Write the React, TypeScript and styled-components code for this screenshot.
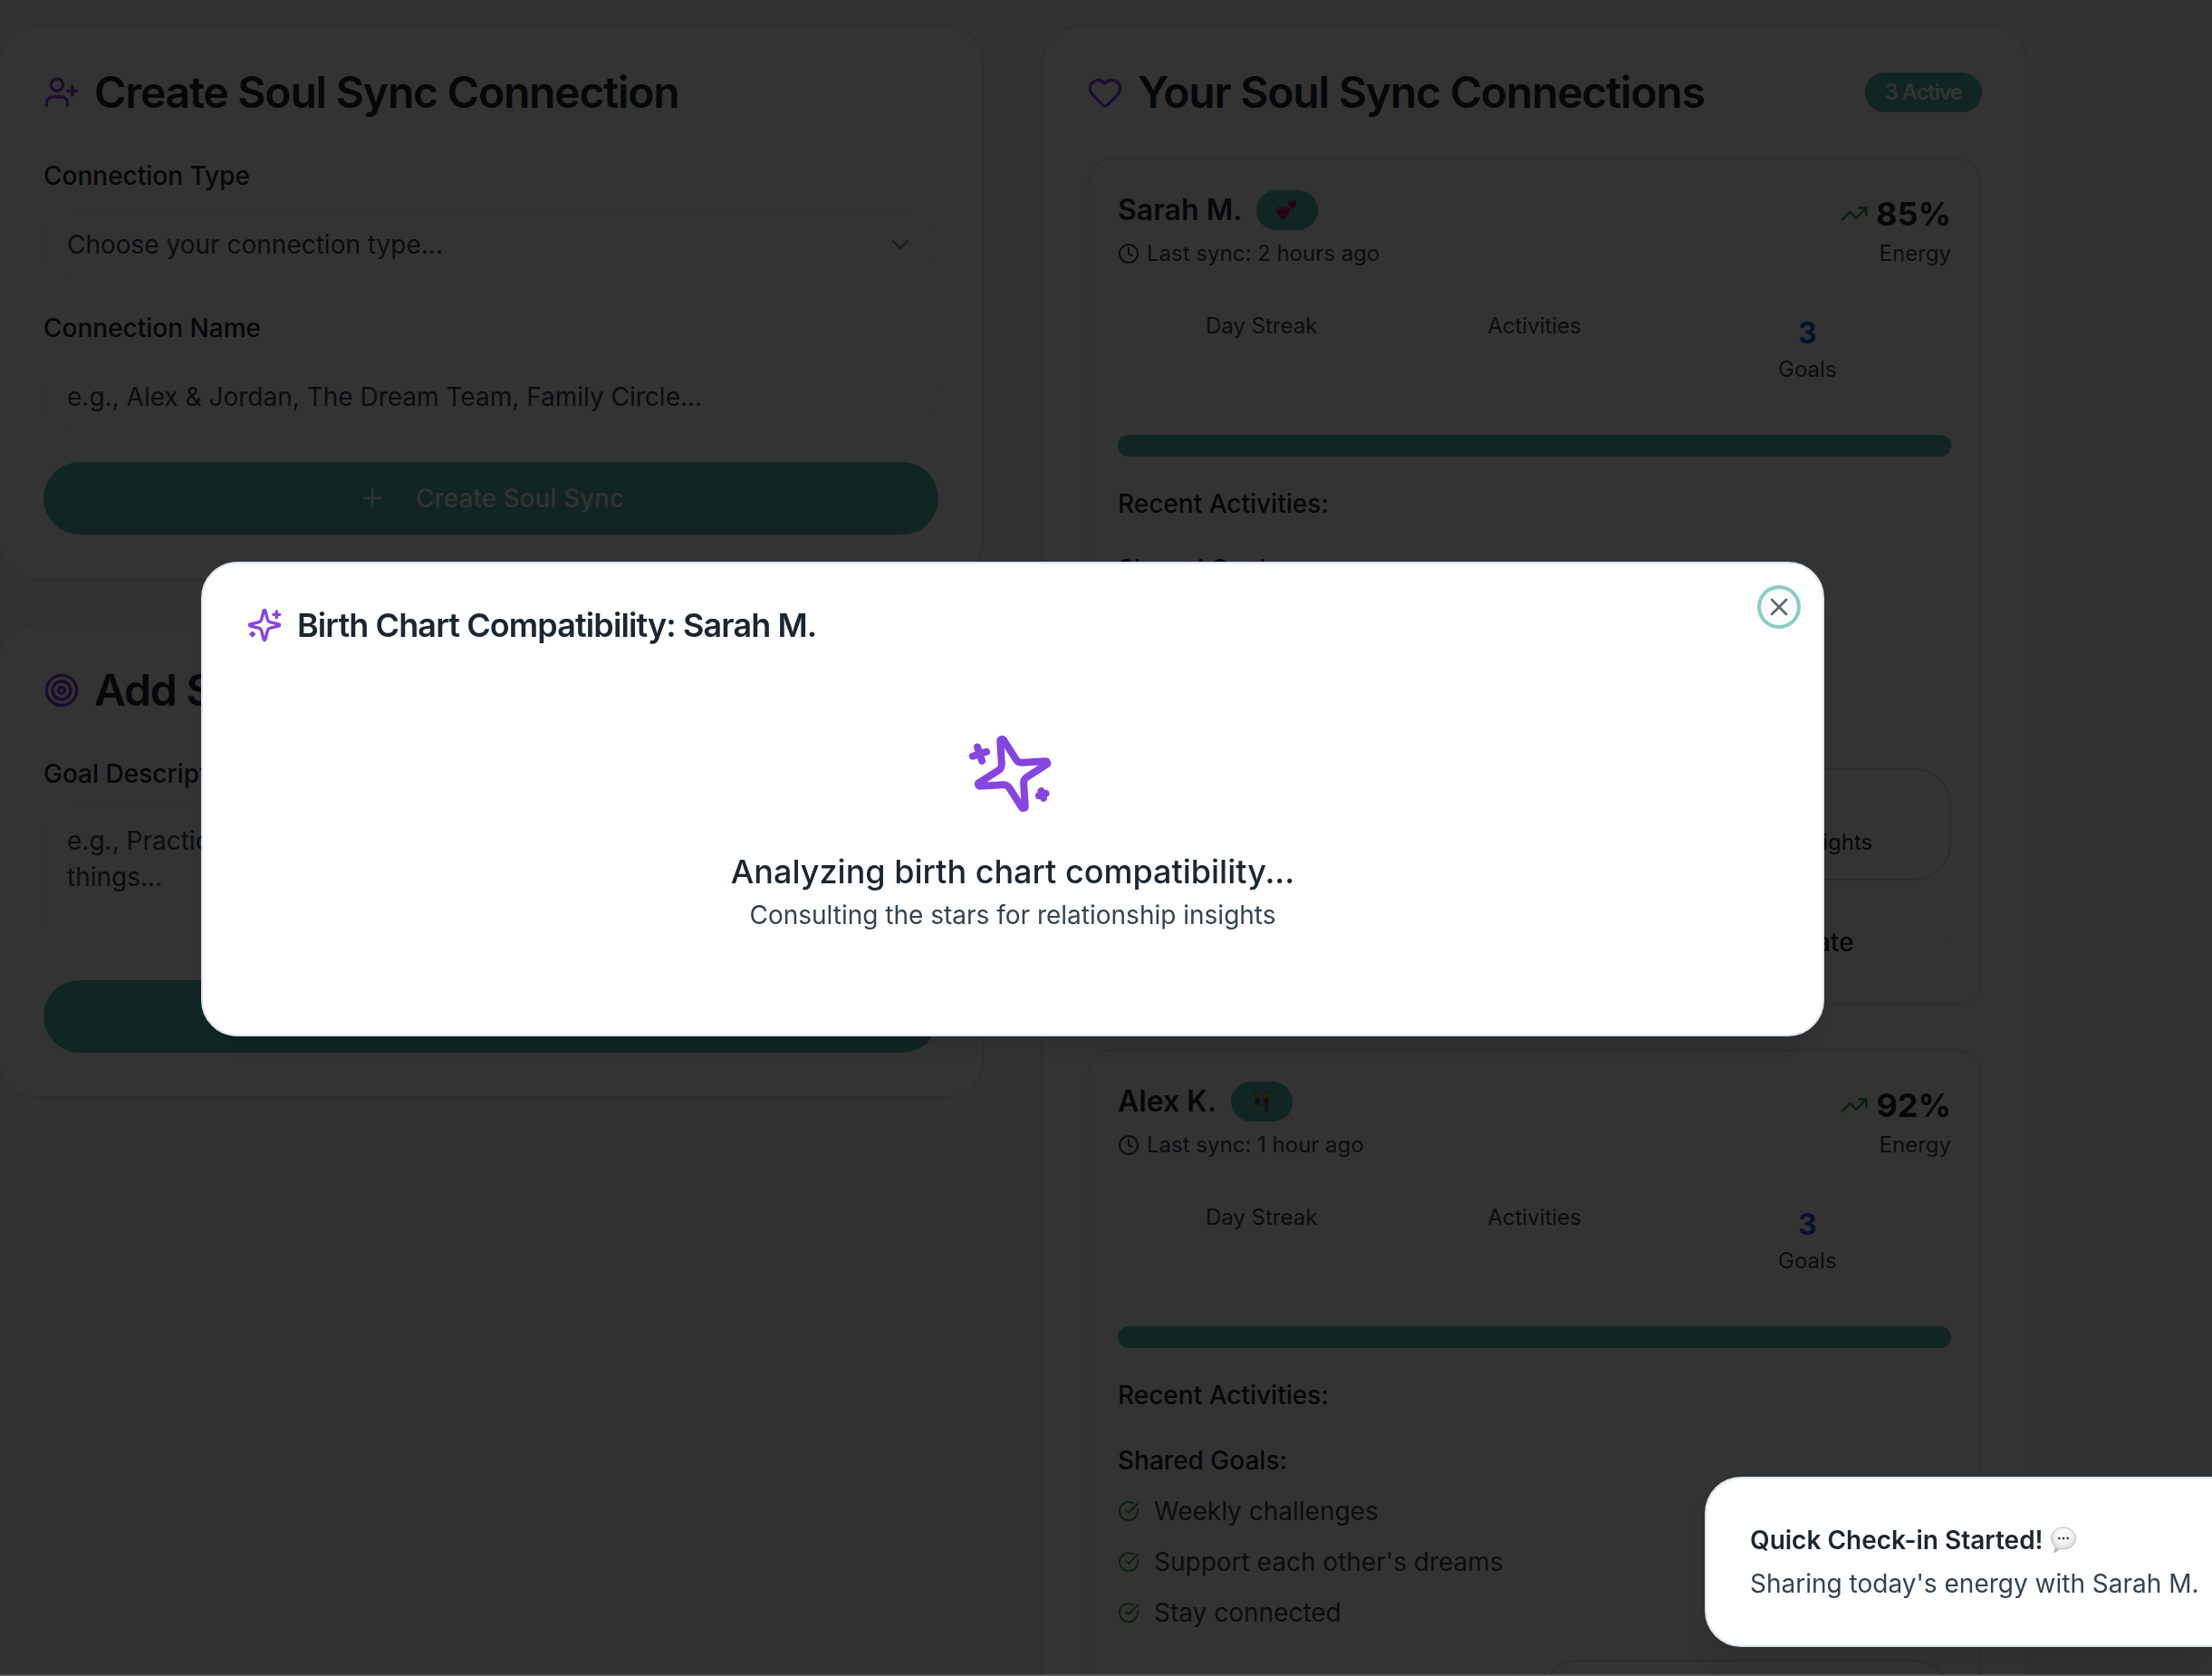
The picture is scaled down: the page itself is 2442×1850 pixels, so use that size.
import React from 'react';
import styled, { createGlobalStyle } from 'styled-components';
import {
  CalendarHeart,
  ChevronDown,
  CircleCheckBig,
  Clock,
  Heart,
  MessageCircle,
  Plus,
  Send,
  Target,
  TrendingUp,
  UserPlus,
  X,
} from 'lucide-react';

const color = {
  ink: '#1c2630',
  slate: '#364250',
  border: '#e2e8f0',
  field: '#f8f9fa',
  primary: '#55b9aa',
  purple: '#8644e1',
  green: '#3f9d4c',
  blue: '#2f4fd8',
};

const GlobalStyle = createGlobalStyle`
  *, *::before, *::after { box-sizing: border-box; }
  html, body { margin: 0; height: 100%; }
  body {
    overflow: hidden;
    background: #fbfbfb;
    color: ${color.ink};
    font-family: Inter, "Liberation Sans", sans-serif;
    font-size: 28px;
    line-height: 40px;
    -webkit-font-smoothing: antialiased;
  }
  h1, h2, h3, h4, p, ul { margin: 0; padding: 0; }
  button, input, select, textarea { font: inherit; color: inherit; }
  svg { flex: none; display: block; }
`;

const Page = styled.main`
  height: 100vh;
  overflow: hidden;
  padding: 28px 204px 0 0;
  background:
    radial-gradient(ellipse 500px 80px at 38% 0, #f3fbf6, transparent),
    radial-gradient(ellipse 600px 1000px at 8% 92%, #f4fbf7, transparent),
    #fbfbfb;
`;

const Columns = styled.div`
  display: grid;
  grid-template-columns: repeat(2, minmax(0, 1fr));
  gap: 64px;
  align-items: start;
  margin-left: -2px;
`;

const Stack = styled.div<{ $gap: number }>`
  display: flex;
  flex-direction: column;
  gap: ${(p) => p.$gap}px;
`;

const Card = styled.section`
  display: flex;
  flex-direction: column;
  gap: 48px;
  padding: 48px;
  background: #fdfdfd;
  border: 2px solid ${color.border};
  border-radius: 40px;
  box-shadow: 0 2px 4px rgba(0, 0, 0, 0.05);
`;

const Row = styled.div<{ $gap: number; $between?: boolean }>`
  display: flex;
  align-items: center;
  gap: ${(p) => p.$gap}px;
  justify-content: ${(p) => (p.$between ? 'space-between' : 'flex-start')};
`;

const CardTitle = styled.h2`
  display: flex;
  align-items: center;
  gap: 16px;
  font-size: 48px;
  line-height: 48px;
  font-weight: 600;
  letter-spacing: -0.025em;
  svg { color: ${color.purple}; }
`;

const Field = styled.div`
  display: flex;
  flex-direction: column;
  gap: 16px;
`;

const Label = styled.label`
  font-weight: 500;
`;

const SelectWrap = styled.div`
  display: grid;
  align-items: center;
  > * { grid-area: 1 / 1; }
  > svg { justify-self: end; margin-right: 26px; opacity: 0.5; pointer-events: none; }
`;

const fieldBase = `
  width: 100%;
  padding: 0 24px;
  background: transparent;
  border: 2px solid ${color.field};
  border-radius: 36px;
  outline: none;
  color: ${color.slate};
`;

const Select = styled.select`
  ${fieldBase}
  height: 80px;
  appearance: none;
`;

const Input = styled.input`
  ${fieldBase}
  height: 80px;
  &::placeholder { color: ${color.slate}; opacity: 1; }
`;

const TextArea = styled.textarea`
  ${fieldBase}
  display: block;
  height: 160px;
  padding: 16px 24px;
  resize: none;
  &::placeholder { color: ${color.slate}; opacity: 1; }
`;

const PrimaryButton = styled.button`
  display: flex;
  align-items: center;
  justify-content: center;
  gap: 32px;
  height: 80px;
  border: 0;
  border-radius: 40px;
  background: ${color.primary};
  color: #fdfdfd;
  font-weight: 500;
`;

const Pill = styled.span`
  display: inline-flex;
  align-items: center;
  height: 44px;
  padding: 0 22px;
  border-radius: 22px;
  background: ${color.primary};
  color: #fdfdfd;
  font-size: 24px;
  line-height: 32px;
  font-weight: 600;
`;

const CountPill = styled(Pill)`
  letter-spacing: -0.05em;
`;

const Connection = styled.article`
  display: flex;
  flex-direction: column;
  gap: 32px;
  padding: 32px;
  border: 2px solid ${color.border};
  border-radius: 28px;
`;

const PersonName = styled.h3`
  font-size: 32px;
  line-height: 48px;
  font-weight: 600;
`;

const Small = styled.div`
  display: flex;
  align-items: center;
  gap: 8px;
  font-size: 24px;
  line-height: 32px;
  color: ${color.slate};
`;

const EnergyColumn = styled.div`
  display: flex;
  flex-direction: column;
  align-items: flex-end;
`;

const Energy = styled.div`
  display: flex;
  align-items: center;
  gap: 8px;
  font-size: 36px;
  line-height: 56px;
  font-weight: 700;
  svg { color: ${color.green}; }
`;

const Stats = styled.div`
  display: grid;
  grid-template-columns: repeat(3, 1fr);
  gap: 16px;
  padding: 16px;
  justify-items: center;
`;

const Stat = styled.div`
  display: flex;
  flex-direction: column;
  align-items: center;
`;

const StatValue = styled.div`
  font-size: 32px;
  line-height: 48px;
  font-weight: 700;
  color: ${color.blue};
`;

const Progress = styled.div`
  height: 24px;
  margin-top: 8px;
  border-radius: 12px;
  background: ${color.primary};
`;

const SubHeading = styled.h4`
  font-size: 28px;
  line-height: 40px;
  font-weight: 500;
`;

const GoalList = styled.ul`
  display: flex;
  flex-direction: column;
  gap: 16px;
  list-style: none;
`;

const Goal = styled.li`
  display: flex;
  align-items: center;
  gap: 16px;
  color: ${color.slate};
  svg { color: ${color.green}; }
`;

const Actions = styled.div`
  display: grid;
  grid-template-columns: repeat(2, minmax(0, 1fr));
  gap: 32px 16px;
`;

const FeatureButton = styled.button<{ $tint: string }>`
  display: flex;
  flex-direction: column;
  align-items: center;
  justify-content: center;
  height: 124px;
  padding: 0 24px;
  border: 2px solid ${(p) => p.$tint};
  border-radius: 40px;
  background: transparent;
  font-weight: 500;
`;

const FeatureHint = styled.span`
  font-size: 24px;
  line-height: 32px;
  font-weight: 400;
`;

const GhostButton = styled.button`
  display: flex;
  align-items: center;
  justify-content: center;
  gap: 32px;
  height: 72px;
  border: 2px solid ${color.field};
  border-radius: 36px;
  background: transparent;
  font-weight: 500;
`;

const Overlay = styled.div`
  position: fixed;
  inset: 0;
  display: flex;
  align-items: center;
  justify-content: center;
  padding: 0 206px 84px 0;
  background: rgba(0, 0, 0, 0.8);
  border-bottom: 2px solid #555555;
`;

const Dialog = styled.div`
  position: relative;
  display: flex;
  flex-direction: column;
  gap: 32px;
  width: 100%;
  max-width: 1792px;
  padding: 48px;
  background: #ffffff;
  border: 2px solid #dce5f0;
  border-radius: 40px;
  box-shadow: 0 20px 30px -6px rgba(0, 0, 0, 0.1), 0 8px 12px -8px rgba(0, 0, 0, 0.1);
`;

const DialogTitle = styled.h2`
  display: flex;
  align-items: center;
  gap: 16px;
  font-size: 36px;
  line-height: 40px;
  font-weight: 600;
  letter-spacing: -0.025em;
  svg { color: ${color.purple}; }
`;

const CloseButton = styled.button`
  position: absolute;
  top: 32px;
  right: 32px;
  display: flex;
  padding: 0;
  border: 0;
  border-radius: 50%;
  background: transparent;
  opacity: 0.7;
  outline: none;
  box-shadow: 0 0 0 4px #ffffff, 0 0 0 8px ${color.primary};
`;

const Loading = styled.div`
  display: flex;
  flex-direction: column;
  align-items: center;
  padding: 64px 0;
`;

const LoadingIcon = styled.div`
  margin-bottom: 32px;
  color: ${color.purple};
  transform: rotate(-108deg);
`;

const LoadingTitle = styled.p`
  font-size: 36px;
  line-height: 56px;
  font-weight: 500;
`;

const Muted = styled.p`
  color: ${color.slate};
`;

const Toast = styled.div`
  position: fixed;
  right: 0;
  bottom: 32px;
  display: flex;
  flex-direction: column;
  gap: 8px;
  width: 560px;
  padding: 48px 0 48px 48px;
  background: #ffffff;
  border: 2px solid #dce5f0;
  border-right: 0;
  border-radius: 40px 0 0 40px;
  box-shadow: 0 20px 30px -6px rgba(0, 0, 0, 0.1);
`;

const ToastTitle = styled.div`
  display: flex;
  align-items: center;
  gap: 8px;
  font-weight: 600;
`;

const Sparkles = ({ size }: { size: number }) => (
  <svg width={size} height={size} viewBox="0 0 24 24" fill="none" stroke="currentColor" strokeWidth="2" strokeLinecap="round" strokeLinejoin="round" aria-hidden="true">
    <path d="M9.937 15.5A2 2 0 0 0 8.5 14.063l-6.135-1.582a.5.5 0 0 1 0-.962L8.5 9.936A2 2 0 0 0 9.937 8.5l1.582-6.135a.5.5 0 0 1 .963 0L14.063 8.5A2 2 0 0 0 15.5 9.937l6.135 1.581a.5.5 0 0 1 0 .964L15.5 14.063a2 2 0 0 0-1.437 1.437l-1.582 6.135a.5.5 0 0 1-.963 0z" />
    <path d="M20 3v4" />
    <path d="M22 5h-4" />
    <path d="M4 17v2" />
    <path d="M5 18H3" />
  </svg>
);

const HeartsEmoji = () => (
  <svg width="24" height="24" viewBox="0 0 24 24" role="img" aria-label="Two hearts">
    <path d="M7.500 23C5 20 0 17 0 12 0 7.500 5.500 6.500 7.500 10 9.500 6.500 15 7.500 15 12 15 17 10 20 7.500 23z" fill="#b8145c" />
    <path d="M17.800 10.500C16.400 9 13 7 13 4.200 13 1.200 16.600.6 17.800 3 19 .6 22.600 1.200 22.600 4.200 22.600 7 19.200 9 17.800 10.500z" fill="#b8145c" />
    <path d="M2.200 10.600c.5-1.300 2-1.600 3-.8M14.800 3.600c.4-.9 1.200-1 1.800-.4M9.800 9.800c.9-.8 2.300-.6 2.900.4" stroke="#dc6f9f" strokeWidth="1.100" fill="none" strokeLinecap="round" />
  </svg>
);

const FriendsEmoji = () => (
  <svg width="24" height="24" viewBox="0 0 24 24" role="img" aria-label="Friends holding hands">
    <circle cx="7" cy="3.800" r="3.400" fill="#a8742a" />
    <circle cx="7" cy="4.600" r="2" fill="#d3a545" />
    <path d="M5 8h4l1.200 7.500H3.800z" fill="#27509f" />
    <path d="M4.600 9 3.200 14M9.400 9l2.200 4.500" stroke="#c39840" strokeWidth="1.100" strokeLinecap="round" />
    <path d="M5.800 15.500v7.500M8.200 15.500v7.500" stroke="#c39840" strokeWidth="1.300" />
    <circle cx="16.800" cy="3.800" r="3" fill="#a8742a" />
    <circle cx="16.800" cy="4.600" r="2" fill="#d3a545" />
    <path d="M14.200 8h5.200l.3 6.500h-5.800z" fill="#a5252d" />
    <path d="M14 9l-2.200 4.500M19.800 9l1.200 5" stroke="#c39840" strokeWidth="1.100" strokeLinecap="round" />
    <path d="M15.500 14.500v9M18.100 14.500v9" stroke="#6a4f47" strokeWidth="2" />
  </svg>
);

const SpeechEmoji = () => (
  <svg width="28" height="30" viewBox="0 0 28 30" role="img" aria-label="Speech balloon">
    <defs>
      <radialGradient id="bubble" cx="0.5" cy="0.35" r="0.65">
        <stop offset="0.4" stopColor="#f8f8f8" />
        <stop offset="0.8" stopColor="#dcdcdc" />
        <stop offset="1" stopColor="#a8a8a8" />
      </radialGradient>
    </defs>
    <path d="M14 1C21.500 1 27.500 6 27.500 13S21.500 25 14 25c-1.600 0-3-.2-4.300-.6C8 26.800 5.600 28.200 3.200 28.400c1.400-1.600 2-3.700 1.700-6.200C2.200 20 .6 16.700.6 13 .6 6 6.500 1 14 1z" fill="url(#bubble)" stroke="#b4b4b4" strokeWidth=".8" />
    <circle cx="9.300" cy="13" r="1.300" fill="#333333" />
    <circle cx="14" cy="13" r="1.300" fill="#333333" />
    <circle cx="18.700" cy="13" r="1.300" fill="#333333" />
  </svg>
);

interface Person {
  name: string;
  emoji: React.ReactNode;
  lastSync: string;
  energy: number;
  goals: string[];
}

const people: Person[] = [
  {
    name: 'Sarah M.',
    emoji: <HeartsEmoji />,
    lastSync: '2 hours ago',
    energy: 85,
    goals: ['Daily gratitude practice', 'Weekly date nights', 'Monthly adventures'],
  },
  {
    name: 'Alex K.',
    emoji: <FriendsEmoji />,
    lastSync: '1 hour ago',
    energy: 92,
    goals: ['Weekly challenges', "Support each other's dreams", 'Stay connected'],
  },
];

const ConnectionCard = ({ person }: { person: Person }) => (
  <Connection>
    <Row $gap={16} $between>
      <Stack $gap={8}>
        <Row $gap={16}>
          <PersonName>{person.name}</PersonName>
          <Pill>{person.emoji}</Pill>
        </Row>
        <Small>
          <Clock size={24} />
          Last sync: {person.lastSync}
        </Small>
      </Stack>
      <EnergyColumn>
        <Energy>
          <TrendingUp size={32} />
          {person.energy}%
        </Energy>
        <Small>Energy</Small>
      </EnergyColumn>
    </Row>
    <Stats>
      <Stat>
        <Small>Day Streak</Small>
      </Stat>
      <Stat>
        <Small>Activities</Small>
      </Stat>
      <Stat>
        <StatValue>{person.goals.length}</StatValue>
        <Small>Goals</Small>
      </Stat>
    </Stats>
    <Progress role="progressbar" aria-label="Energy level" aria-valuenow={person.energy} />
    <SubHeading>Recent Activities:</SubHeading>
    <Stack $gap={16}>
      <SubHeading>Shared Goals:</SubHeading>
      <GoalList>
        {person.goals.map((goal) => (
          <Goal key={goal}>
            <CircleCheckBig size={24} />
            {goal}
          </Goal>
        ))}
      </GoalList>
    </Stack>
    <Actions>
      <FeatureButton $tint={color.field}>
        Quick Check-in
        <FeatureHint>Share today's energy</FeatureHint>
      </FeatureButton>
      <FeatureButton $tint="#e3daf6">
        Birth Chart
        <FeatureHint>Star relationship insights</FeatureHint>
      </FeatureButton>
      <GhostButton>
        <MessageCircle size={32} />
        Message
      </GhostButton>
      <GhostButton>
        <CalendarHeart size={32} />
        Send Update
      </GhostButton>
    </Actions>
  </Connection>
);

export default function App() {
  return (
    <>
      <GlobalStyle />
      <Page>
        <Columns>
          <Stack $gap={48}>
            <Card>
              <CardTitle>
                <UserPlus size={40} />
                Create Soul Sync Connection
              </CardTitle>
              <Stack $gap={32}>
                <Field>
                  <Label htmlFor="connection-type">Connection Type</Label>
                  <SelectWrap>
                    <Select id="connection-type" defaultValue="">
                      <option value="">Choose your connection type...</option>
                    </Select>
                    <ChevronDown size={32} />
                  </SelectWrap>
                </Field>
                <Field>
                  <Label htmlFor="connection-name">Connection Name</Label>
                  <Input id="connection-name" placeholder="e.g., Alex &amp; Jordan, The Dream Team, Family Circle..." />
                </Field>
                <PrimaryButton>
                  <Plus size={32} />
                  Create Soul Sync
                </PrimaryButton>
              </Stack>
            </Card>
            <Card>
              <CardTitle>
                <Target size={40} />
                Add Shared Goal
              </CardTitle>
              <Stack $gap={32}>
                <Field>
                  <Label htmlFor="goal">Goal Description</Label>
                  <TextArea id="goal" placeholder="e.g., Practice gratitude together, Exercise 3x per week, Learn new things..." />
                </Field>
                <PrimaryButton>
                  <Send size={32} />
                  Add Goal
                </PrimaryButton>
              </Stack>
            </Card>
          </Stack>
          <Card>
            <Row $gap={16} $between>
              <CardTitle>
                <Heart size={40} />
                Your Soul Sync Connections
              </CardTitle>
              <CountPill>3 Active</CountPill>
            </Row>
            <Stack $gap={48}>
              {people.map((person) => (
                <ConnectionCard key={person.name} person={person} />
              ))}
            </Stack>
          </Card>
        </Columns>
      </Page>
      <Overlay>
        <Dialog role="dialog" aria-modal="true" aria-labelledby="dialog-title">
          <DialogTitle id="dialog-title">
            <Sparkles size={40} />
            Birth Chart Compatibility: Sarah M.
          </DialogTitle>
          <Loading>
            <LoadingIcon>
              <Sparkles size={96} />
            </LoadingIcon>
            <LoadingTitle>Analyzing birth chart compatibility...</LoadingTitle>
            <Muted>Consulting the stars for relationship insights</Muted>
          </Loading>
          <CloseButton aria-label="Close">
            <X size={32} />
          </CloseButton>
        </Dialog>
      </Overlay>
      <Toast role="status">
        <ToastTitle>
          Quick Check-in Started!
          <SpeechEmoji />
        </ToastTitle>
        <Muted>Sharing today's energy with Sarah M.</Muted>
      </Toast>
    </>
  );
}
